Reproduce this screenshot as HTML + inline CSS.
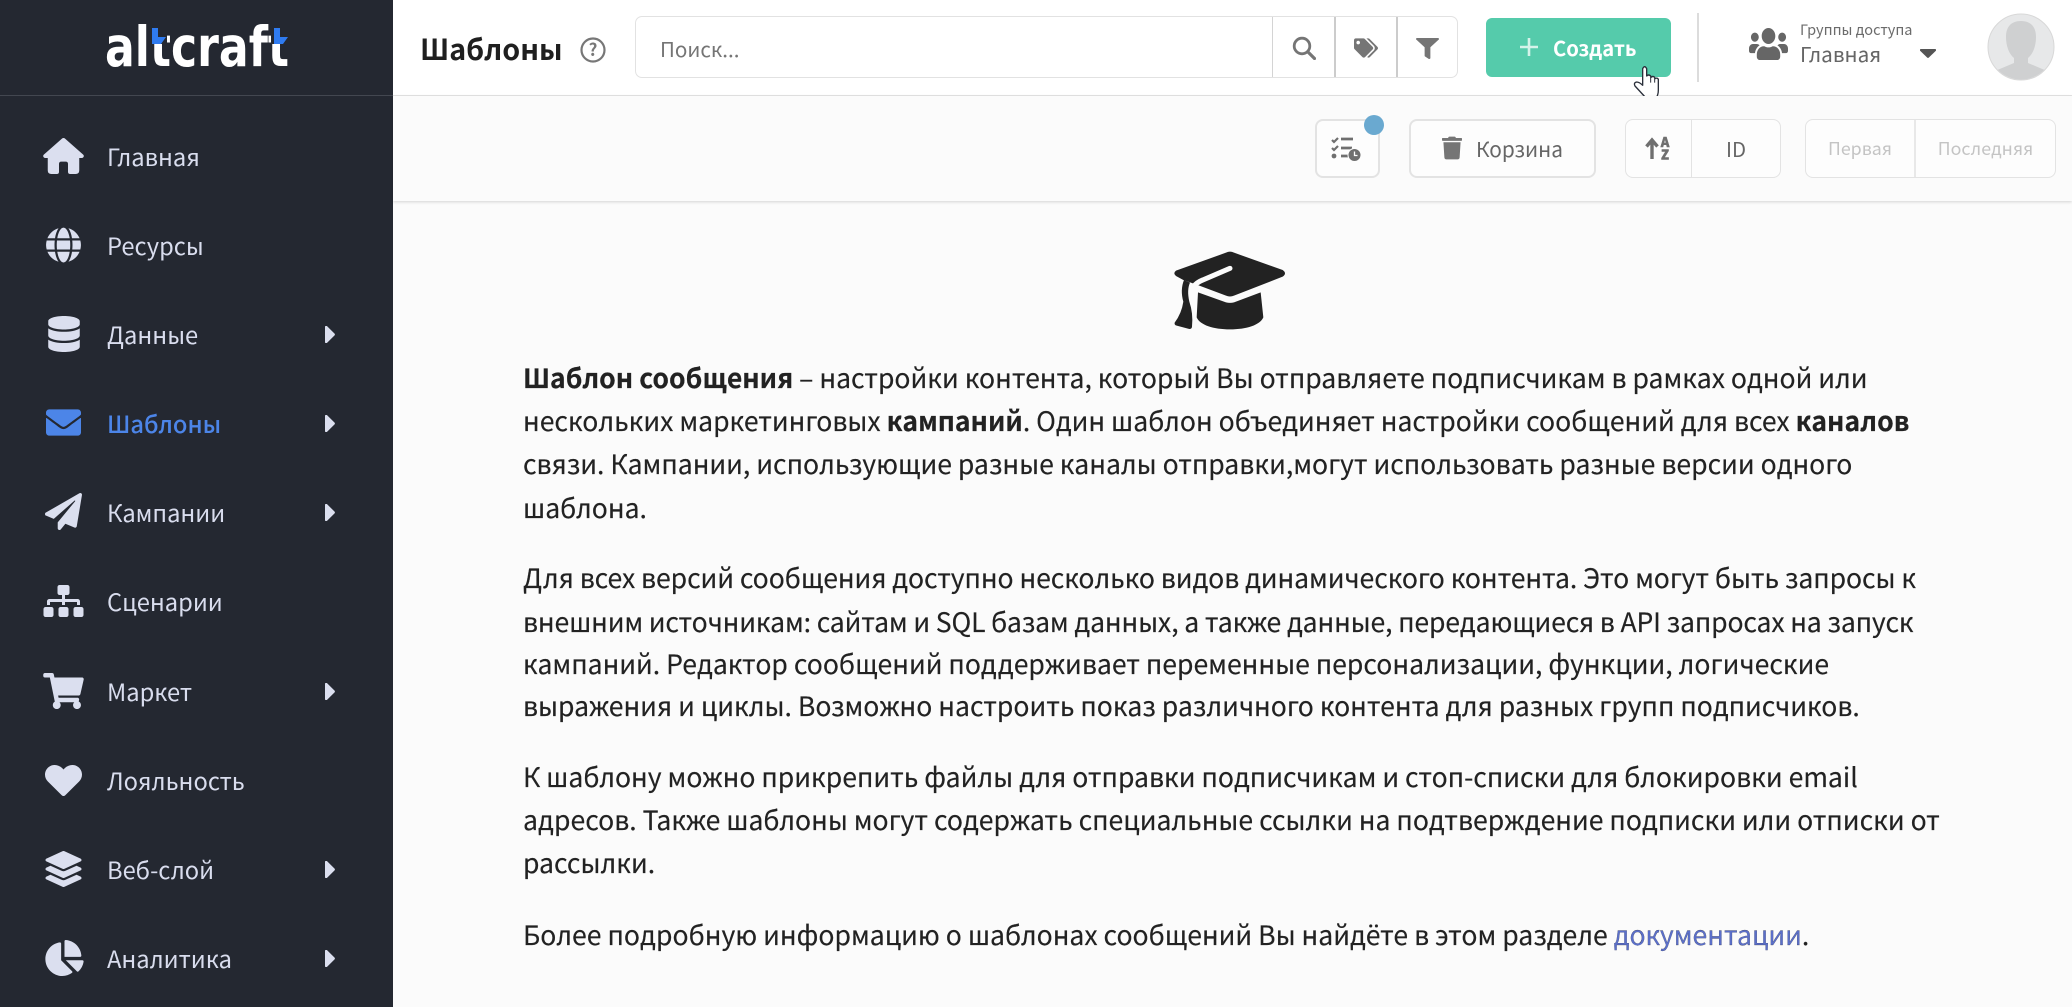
<!DOCTYPE html>
<html lang="ru"><head><meta charset="utf-8"><title>Шаблоны</title>
<style>
html,body{margin:0;padding:0;width:2072px;height:1007px;overflow:hidden;background:#fbfbfb}
body{font-family:"Noto Sans CJK JP","Liberation Sans",sans-serif;color:#222;position:relative}
.a,svg.i{position:absolute}
.t{position:absolute;white-space:nowrap}
#side{position:absolute;left:0;top:0;width:393px;height:1007px;background:#242831}
#hd{position:absolute;left:393px;top:0;width:1679px;height:95px;background:#fff;border-bottom:1px solid #e4e4e4}
#tb{position:absolute;left:393px;top:96px;width:1679px;height:105px;background:#fbfbfb;box-shadow:0 1px 3px rgba(0,0,0,.16)}
.n{left:107px;font-size:23.7px;line-height:40px;height:40px;color:#d9ddee}
.l{left:523px;font-size:26.57px;line-height:44px;height:44px;color:#222;-webkit-text-stroke:.15px #222}
.l b{font-weight:700}
.ic{fill:#dbdfef}
.box{position:absolute;box-sizing:border-box;border:2px solid #e3e3e3;border-radius:8px;background:#fdfdfd}
</style></head><body>
<div id="side"></div>
<div class="a" style="left:0;top:95px;width:393px;height:1px;background:#434750"></div>

<svg class="i" style="left:100px;top:20px" width="200" height="55" viewBox="0 0 200 55">
<text x="5" y="46" font-family="'DejaVu Sans',sans-serif" font-weight="700" font-size="55" fill="#fff" textLength="184" lengthAdjust="spacingAndGlyphs">altcraft</text>
<path d="M48 0H67V24H48Z M171 0H192V24H171Z" fill="#242831"/>
<path d="M52 8L58 8L58 17L66 17L61 24L52 24Z M174 8L180 8L180 17L188 17L183 24L174 24Z" fill="#2f7bf0"/>
</svg>

<svg class="i ic" style="left:43px;top:138px" width="41" height="36" viewBox="0 0 576 512"><path d="M288 0Q300 0 310 9L568 236Q582 250 574 268Q566 284 546 284H512V460Q512 512 460 512H384Q352 512 352 480V368Q352 336 320 336H256Q224 336 224 368V480Q224 512 192 512H116Q64 512 64 460V284H30Q10 284 2 268Q-6 250 8 236L266 9Q276 0 288 0Z"/></svg>
<svg class="i ic" style="left:45px;top:227px" width="37" height="36" viewBox="0 0 496 512"><path d="M336.5 160C322 70.7 287.8 8 248 8s-74 62.7-88.5 152h177zM152 256c0 22.2 1.2 43.5 3.3 64h185.3c2.1-20.5 3.3-41.8 3.3-64s-1.2-43.5-3.3-64H155.3c-2.1 20.5-3.3 41.8-3.3 64zm324.7-96c-28.6-67.9-86.5-120.4-158-141.6 24.4 33.8 41.2 84.7 50 141.6h108zM177.2 18.4C105.8 39.6 47.8 92.1 19.3 160h108c8.7-56.9 25.5-107.8 49.9-141.6zM487.4 192H372.7c2.1 21 3.3 42.5 3.3 64s-1.2 43-3.3 64h114.6c5.5-20.5 8.6-41.8 8.6-64s-3.1-43.5-8.5-64zM120 256c0-21.5 1.2-43 3.3-64H8.6C3.2 212.5 0 233.8 0 256s3.2 43.5 8.6 64h114.6c-2-21-3.2-42.5-3.2-64zm39.5 96c14.5 89.3 48.7 152 88.5 152s74-62.7 88.5-152h-177zm159.3 141.6c71.4-21.2 129.4-73.7 158-141.6h-108c-8.8 56.9-25.6 107.8-50 141.6zM19.3 352c28.6 67.9 86.5 120.4 158 141.6-24.4-33.8-41.2-84.7-50-141.6h-108z"/></svg>
<svg class="i ic" style="left:48px;top:316px" width="32" height="36" viewBox="0 0 448 512"><path d="M448 73.143v45.714C448 159.143 347.667 192 224 192S0 159.143 0 118.857V73.143C0 32.857 100.333 0 224 0s224 32.857 224 73.143zM448 176v102.857C448 319.143 347.667 352 224 352S0 319.143 0 278.857V176c48.125 33.143 136.208 48.572 224 48.572S399.874 209.143 448 176zm0 160v102.857C448 479.143 347.667 512 224 512S0 479.143 0 438.857V336c48.125 33.143 136.208 48.572 224 48.572S399.874 369.143 448 336z"/></svg>
<svg class="i" style="left:46px;top:409px" width="35" height="27" viewBox="0 64 512 384" fill="#4c85e8"><path d="M502.3 190.8c3.9-3.1 9.7-.2 9.7 4.7V400c0 26.5-21.5 48-48 48H48c-26.5 0-48-21.5-48-48V195.6c0-5 5.7-7.8 9.7-4.7 22.4 17.4 52.1 39.5 154.1 113.6 21.1 15.4 56.7 47.8 92.2 47.6 35.7.3 72-32.8 92.3-47.6 102-74.1 131.6-96.3 154-113.7zM256 320c23.2.4 56.6-29.2 73.4-41.4 132.7-96.3 142.8-104.7 173.4-128.7 5.8-4.5 9.2-11.5 9.2-18.9v-19c0-26.5-21.5-48-48-48H48C21.5 64 0 85.5 0 112v19c0 7.4 3.4 14.3 9.2 18.9 30.6 23.9 40.7 32.4 173.4 128.7 16.8 12.2 50.2 41.8 73.4 41.4z"/></svg>
<svg class="i ic" style="left:45px;top:493px" width="37" height="37" viewBox="0 0 512 512"><path d="M476 3.2L12.5 270.6c-18.1 10.4-15.8 35.6 2.2 43.2L121 358.4l287.3-253.2c5.5-4.9 13.3 2.6 8.6 8.3L176 407v80.5c0 23.6 28.5 32.9 42.5 15.8L282 426l124.6 52.2c14.2 6 30.4-2.9 33-18.2l72-432C515 7.8 493.3-6.8 476 3.2z"/></svg>
<svg class="i ic" style="left:43px;top:585px" width="41" height="32" viewBox="0 0 640 512"><path d="M128 352H32c-17.67 0-32 14.33-32 32v96c0 17.67 14.33 32 32 32h96c17.67 0 32-14.33 32-32v-96c0-17.67-14.33-32-32-32zm-24-80h192v48h48v-48h192v48h48v-57.59c0-21.17-17.23-38.41-38.41-38.41H344v-64h40c17.67 0 32-14.33 32-32V32c0-17.67-14.33-32-32-32H256c-17.67 0-32 14.33-32 32v96c0 17.67 14.33 32 32 32h40v64H94.41C73.23 224 56 241.23 56 262.41V320h48v-48zm264 80h-96c-17.67 0-32 14.33-32 32v96c0 17.67 14.33 32 32 32h96c17.67 0 32-14.33 32-32v-96c0-17.67-14.33-32-32-32zm240 0h-96c-17.67 0-32 14.33-32 32v96c0 17.67 14.33 32 32 32h96c17.67 0 32-14.33 32-32v-96c0-17.67-14.33-32-32-32z"/></svg>
<svg class="i ic" style="left:43px;top:673px" width="41" height="36" viewBox="0 0 576 512"><path d="M528.12 301.319l47.273-208C578.806 78.301 567.391 64 551.99 64H159.208l-9.166-44.81C147.758 8.021 137.93 0 126.529 0H24C10.745 0 0 10.745 0 24v16c0 13.255 10.745 24 24 24h69.883l70.248 343.435C147.325 417.1 136 435.222 136 456c0 30.928 25.072 56 56 56s56-25.072 56-56c0-15.674-6.447-29.835-16.824-40h209.647C430.447 426.165 424 440.326 424 456c0 30.928 25.072 56 56 56s56-25.072 56-56c0-22.172-12.888-41.332-31.579-50.405l5.517-24.276c3.413-15.018-8.002-29.319-23.403-29.319H218.117l-6.545-32h293.145c11.206 0 20.92-7.754 23.403-18.681z"/></svg>
<svg class="i ic" style="left:45px;top:765px" width="37" height="31" viewBox="0 32 512 448" preserveAspectRatio="none"><path d="M462.3 62.6C407.5 15.9 326 24.3 275.7 76.2L256 96.5l-19.7-20.3C186.1 24.3 104.5 15.9 49.7 62.6c-62.8 53.6-66.1 149.8-9.9 207.9l193.5 199.8c12.5 12.9 32.8 12.9 45.3 0l193.5-199.8c56.3-58.1 53-154.3-9.8-207.9z"/></svg>
<svg class="i ic" style="left:45px;top:851px" width="37" height="36" viewBox="0 0 512 512"><path d="M12.41 148.02l232.94 105.67c6.8 3.09 14.49 3.09 21.29 0l232.94-105.67c16.55-7.51 16.55-32.52 0-40.03L266.65 2.31a25.607 25.607 0 0 0-21.29 0L12.41 107.98c-16.55 7.51-16.55 32.53 0 40.04zm487.18 88.28l-58.09-26.33-161.64 73.27c-7.56 3.43-15.59 5.17-23.86 5.17s-16.29-1.74-23.86-5.17L70.51 209.97l-58.1 26.33c-16.55 7.5-16.55 32.5 0 40l232.94 105.59c6.8 3.08 14.49 3.08 21.29 0L499.59 276.3c16.55-7.5 16.55-32.5 0-40zm0 127.8l-57.87-26.23-161.86 73.37c-7.56 3.43-15.59 5.17-23.86 5.17s-16.29-1.74-23.86-5.17L70.29 337.87 12.41 364.1c-16.55 7.5-16.55 32.5 0 40l232.94 105.59c6.8 3.08 14.49 3.08 21.29 0L499.59 404.1c16.55-7.5 16.55-32.5 0-40z"/></svg>
<svg class="i ic" style="left:45px;top:940px" width="39" height="36" viewBox="0 0 544 512"><path d="M527.79 288H290.5l158.03 158.03c6.04 6.04 15.98 6.53 22.19.68 38.7-36.46 65.32-85.61 73.13-140.86 1.34-9.46-6.51-17.85-16.06-17.85zm-15.83-64.8C503.72 103.74 408.26 8.28 288.8.04 279.68-.59 272 7.1 272 16.24V240h223.77c9.14 0 16.82-7.68 16.19-16.8zM224 288V50.71c0-9.55-8.39-17.4-17.84-16.06C86.99 51.49-4.1 155.6.14 280.37 4.5 408.51 114.83 513.59 243.03 511.98c50.4-.63 96.97-16.87 135.26-44.03 7.9-5.6 8.42-17.23 1.57-24.08L224 288z"/></svg>

<div class="t n" style="top:136px">Главная</div>
<div class="t n" style="top:225px">Ресурсы</div>
<div class="t n" style="top:314px">Данные</div>
<div class="t n" style="top:403px;color:#4c85e8;font-weight:500">Шаблоны</div>
<div class="t n" style="top:492px">Кампании</div>
<div class="t n" style="top:581px">Сценарии</div>
<div class="t n" style="top:671px">Маркет</div>
<div class="t n" style="top:760px">Лояльность</div>
<div class="t n" style="top:849px">Веб-слой</div>
<div class="t n" style="top:938px">Аналитика</div>

<svg class="i ic" style="left:325px;top:326px" width="10" height="17" viewBox="0 112 170 288" preserveAspectRatio="none"><path id="cr" d="M0 384.662V127.338c0-17.818 21.543-26.741 34.142-14.142l128.662 128.662c7.81 7.81 7.81 20.474 0 28.284L34.142 398.804C21.543 411.404 0 402.48 0 384.662z"/></svg>
<svg class="i ic" style="left:325px;top:415px" width="10" height="17" viewBox="0 112 170 288" preserveAspectRatio="none"><use href="#cr"/></svg>
<svg class="i ic" style="left:325px;top:504px" width="10" height="17" viewBox="0 112 170 288" preserveAspectRatio="none"><use href="#cr"/></svg>
<svg class="i ic" style="left:325px;top:683px" width="10" height="17" viewBox="0 112 170 288" preserveAspectRatio="none"><use href="#cr"/></svg>
<svg class="i ic" style="left:325px;top:861px" width="10" height="17" viewBox="0 112 170 288" preserveAspectRatio="none"><use href="#cr"/></svg>
<svg class="i ic" style="left:325px;top:950px" width="10" height="17" viewBox="0 112 170 288" preserveAspectRatio="none"><use href="#cr"/></svg>

<div id="hd"></div>
<div class="t" style="left:420px;top:27px;font-size:28.7px;line-height:44px;font-weight:700;color:#1f1f1f">Шаблоны</div>
<svg class="i" style="left:580px;top:37px" width="26" height="26" viewBox="0 0 26 26"><circle cx="13" cy="13" r="11.5" fill="none" stroke="#777" stroke-width="2.2"/><text x="13" y="19" text-anchor="middle" font-size="17" font-weight="700" fill="#777">?</text></svg>

<div class="a" style="left:635px;top:16px;width:823px;height:62px;box-sizing:border-box;border:1.5px solid #e2e2e2;border-radius:7px;background:#fff"></div>
<div class="t" style="left:660px;top:30px;font-size:20.6px;line-height:36px;color:#757575">Поиск...</div>
<div class="a" style="left:1272px;top:17px;width:1px;height:60px;background:#d4d4d4"></div>
<div class="a" style="left:1334px;top:17px;width:2px;height:60px;background:#ccc"></div>
<div class="a" style="left:1396px;top:17px;width:2px;height:60px;background:#ccc"></div>
<svg class="i" style="left:1292px;top:36px" width="24" height="24" viewBox="0 0 24 24" fill="none" stroke="#757575"><circle cx="10" cy="10" r="7.8" stroke-width="2.8"/><path d="M16 16l6.5 6.5" stroke-width="3.2" stroke-linecap="round"/></svg>
<svg class="i" style="left:1354px;top:38px" width="24" height="20" viewBox="0 0 640 512" fill="#757575"><path d="M497.941 225.941L286.059 14.059A48 48 0 0 0 252.118 0H48C21.49 0 0 21.49 0 48v204.118a48 48 0 0 0 14.059 33.941l211.882 211.882c18.744 18.745 49.136 18.746 67.882 0l204.118-204.118c18.745-18.745 18.745-49.137 0-67.882zM112 160c-26.51 0-48-21.49-48-48s21.49-48 48-48 48 21.49 48 48-21.49 48-48 48zm513.941 133.823L421.823 497.941c-18.745 18.745-49.137 18.745-67.882 0l-.36-.36L527.64 323.522c16.999-16.999 26.36-39.6 26.36-63.64s-9.362-46.641-26.36-63.64L331.397 0h48.721a48 48 0 0 1 33.941 14.059l211.882 211.882c18.745 18.745 18.745 49.137 0 67.882z"/></svg>
<svg class="i" style="left:1416px;top:38px" width="23" height="21" viewBox="0 0 512 512" preserveAspectRatio="none" fill="#757575"><path d="M487.976 0H24.028C2.71 0-8.047 25.866 7.058 40.971L192 225.941V432c0 7.831 3.821 15.17 10.237 19.662l80 55.98C298.02 518.69 320 507.493 320 487.98V225.941l184.947-184.97C520.021 25.896 509.338 0 487.976 0z"/></svg>

<div class="a" style="left:1486px;top:18px;width:185px;height:59px;border-radius:6px;background:#55cbab"></div>
<svg class="i" style="left:1519px;top:37px" width="20" height="20" viewBox="0 0 20 20"><path d="M10 1v18M1 10h18" stroke="#d5f3ea" stroke-width="2.6"/></svg>
<div class="t" style="left:1553px;top:30px;font-size:20.2px;line-height:36px;font-weight:700;color:#fff">Создать</div>
<svg class="i" style="left:1620px;top:60px" width="60" height="45" viewBox="0 0 180 135"><path d="M68 72V26Q74 14 80 26V48Q86 42 92 48L93 52Q99 47 104 52L105 56Q112 52 115 58V90Q115 105 108 114H78L45 78Q40 68 50 66Q58 66 68 76Z" fill="#fff" stroke="#2a2f3a" stroke-width="4" stroke-linejoin="round"/><path d="M92 50V68M104 54V68" stroke="#2a2f3a" stroke-width="3" fill="none"/></svg>

<div class="a" style="left:1697px;top:13px;width:2px;height:69px;background:#dcdcdc"></div>
<svg class="i" style="left:1749px;top:28px" width="39" height="32" viewBox="0 32 640 448" preserveAspectRatio="none" fill="#666"><path d="M96 224c35.3 0 64-28.7 64-64s-28.7-64-64-64-64 28.7-64 64 28.7 64 64 64zm448 0c35.3 0 64-28.7 64-64s-28.7-64-64-64-64 28.7-64 64 28.7 64 64 64zm32 32h-64c-17.6 0-33.5 7.1-45.1 18.6 40.3 22.1 68.9 62 75.1 109.4h66c17.7 0 32-14.3 32-32v-32c0-35.3-28.7-64-64-64zm-256 0c61.9 0 112-50.1 112-112S381.9 32 320 32 208 82.1 208 144s50.1 112 112 112zm76.8 32h-8.3c-20.8 10-43.9 16-68.5 16s-47.6-6-68.5-16h-8.3C179.6 288 128 339.6 128 403.2V432c0 26.5 21.5 48 48 48h288c26.5 0 48-21.5 48-48v-28.8c0-63.6-51.6-115.2-115.2-115.2zm-223.7-13.4C161.5 263.1 145.6 256 128 256H64c-35.3 0-64 28.7-64 64v32c0 17.7 14.3 32 32 32h65.9c6.3-47.4 34.9-87.3 75.2-109.4z"/></svg>
<div class="t" style="left:1800px;top:19px;font-size:14.5px;line-height:22px;color:#6b6b6b">Группы доступа</div>
<div class="t" style="left:1800px;top:35px;font-size:20.7px;line-height:36px;color:#666">Главная</div>
<svg class="i" style="left:1920px;top:49px" width="16" height="9" viewBox="15 192 290 170" preserveAspectRatio="none" fill="#555"><path d="M31.3 192h257.3c17.8 0 26.7 21.5 14.1 34.1L174.1 354.8c-7.8 7.8-20.5 7.8-28.3 0L17.2 226.1C4.6 213.5 13.5 192 31.3 192z"/></svg>
<svg class="i" style="left:1987px;top:13px" width="68" height="68" viewBox="0 0 68 68"><defs><clipPath id="av"><circle cx="34" cy="34" r="32.5"/></clipPath></defs><circle cx="34" cy="34" r="33" fill="#e7e8e9" stroke="#d8d8d8" stroke-width="1"/><g clip-path="url(#av)" fill="#cfd0d1"><path d="M34 8C24 8 19 14 19 24C19 33 22 41 27 45V50L8 58L4 68H64L60 58L41 50V45C46 41 49 33 49 24C49 14 44 8 34 8Z"/></g></svg>

<div id="tb"></div>
<div class="box" style="left:1315px;top:119px;width:65px;height:59px"></div>
<svg class="i" style="left:1331px;top:136px" width="30" height="26" viewBox="0 0 30 26" fill="none" stroke="#6f6f6f"><path d="M1 4l2 2 4-4M1 12l2 2 4-4" stroke-width="2.2"/><circle cx="3" cy="20" r="2.4" fill="#6f6f6f" stroke="none"/><path d="M10 3h12M10 12h11M10 20h8" stroke-width="2.8"/><circle cx="23.5" cy="19" r="6.5" fill="#6f6f6f" stroke="#fdfdfd" stroke-width="1"/><path d="M23.5 15.5v4h3" stroke="#fdfdfd" stroke-width="1.3"/></svg>
<div class="a" style="left:1364px;top:115px;width:20px;height:20px;border-radius:50%;background:#6aa9d0"></div>

<div class="box" style="left:1409px;top:119px;width:187px;height:59px"></div>
<svg class="i" style="left:1442px;top:136px" width="20" height="24" viewBox="0 0 448 512" fill="#757575"><path d="M432 32H312l-9.4-18.7A24 24 0 0 0 281.1 0H166.8a23.72 23.72 0 0 0-21.4 13.3L136 32H16A16 16 0 0 0 0 48v32a16 16 0 0 0 16 16h416a16 16 0 0 0 16-16V48a16 16 0 0 0-16-16zM53.2 467a48 48 0 0 0 47.9 45h245.8a48 48 0 0 0 47.9-45L416 128H32z"/></svg>
<div class="t" style="left:1476px;top:130px;font-size:20.8px;line-height:36px;color:#666">Корзина</div>

<div class="box" style="left:1625px;top:119px;width:156px;height:59px;border-width:1.5px"></div>
<div class="a" style="left:1691px;top:120px;width:1px;height:57px;background:#e3e3e3"></div>
<svg class="i" style="left:1645px;top:136px" width="26" height="26" viewBox="0 0 26 26"><path d="M7 5V23M1.5 10.5L7 4l5.5 6.5" fill="none" stroke="#6f6f6f" stroke-width="3.4"/><text x="20" y="11" text-anchor="middle" font-size="13" font-weight="900" fill="#6f6f6f" stroke="#6f6f6f" stroke-width=".5">A</text><text x="20" y="23.5" text-anchor="middle" font-size="13" font-weight="900" fill="#6f6f6f" stroke="#6f6f6f" stroke-width=".5">Z</text></svg>
<div class="t" style="left:1691px;width:90px;text-align:center;top:130px;font-size:20.4px;line-height:36px;color:#666">ID</div>

<div class="box" style="left:1805px;top:119px;width:251px;height:59px;border-width:1.5px"></div>
<div class="a" style="left:1914px;top:120px;width:2px;height:57px;background:#e8e8e8"></div>
<div class="t" style="left:1806px;width:108px;text-align:center;top:130px;font-size:17.8px;line-height:36px;color:#c4c4c4">Первая</div>
<div class="t" style="left:1915px;width:141px;text-align:center;top:130px;font-size:17.8px;line-height:36px;color:#c4c4c4">Последняя</div>

<svg class="i" style="left:1140px;top:230px" width="180" height="120" viewBox="0 0 540 360"><path d="M258 68Q270 62 282 68L428 120Q442 130 428 140L282 197Q270 202 258 197L178 167L130 150L108 138Q98 130 108 122Z" fill="#222"/><path d="M174 187L258 217Q270 220 282 217L362 187L370 262C360 285 320 298 270 298C220 298 180 285 170 262Z" fill="#222"/><path d="M270 115L188 150Q150 165 152 205" fill="none" stroke="#fbfbfb" stroke-width="15" stroke-linecap="round"/><path d="M132 150Q120 180 130 215Q125 250 104 278Q102 285 110 287L148 297Q156 297 156 290Q160 250 148 215Q140 180 150 158Z" fill="#222"/></svg>

<div class="t l" style="top:355px"><b>Шаблон сообщения</b> – настройки контента, который Вы отправляете подписчикам в рамках одной или</div>
<div class="t l" style="top:398px">нескольких маркетинговых <b>кампаний</b>. Один шаблон объединяет настройки сообщений для всех <b>каналов</b></div>
<div class="t l" style="top:441px">связи. Кампании, использующие разные каналы отправки,могут использовать разные версии одного</div>
<div class="t l" style="top:485px">шаблона.</div>
<div class="t l" style="top:555px;letter-spacing:-.065px">Для всех версий сообщения доступно несколько видов динамического контента. Это могут быть запросы к</div>
<div class="t l" style="top:599px;letter-spacing:-.14px">внешним источникам: сайтам и SQL базам данных, а также данные, передающиеся в API запросах на запуск</div>
<div class="t l" style="top:641px">кампаний. Редактор сообщений поддерживает переменные персонализации, функции, логические</div>
<div class="t l" style="top:683px">выражения и циклы. Возможно настроить показ различного контента для разных групп подписчиков.</div>
<div class="t l" style="top:754px">К шаблону можно прикрепить файлы для отправки подписчикам и стоп-списки для блокировки email</div>
<div class="t l" style="top:797px">адресов. Также шаблоны могут содержать специальные ссылки на подтверждение подписки или отписки от</div>
<div class="t l" style="top:840px">рассылки.</div>
<div class="t l" style="top:912px">Более подробную информацию о шаблонах сообщений Вы найдёте в этом разделе <span style="color:#5b6fc9">документации</span>.</div>
</body></html>
